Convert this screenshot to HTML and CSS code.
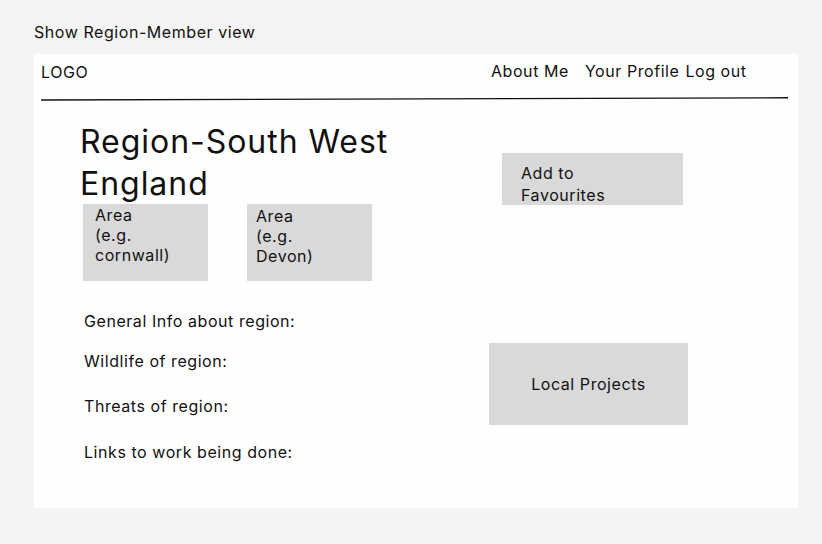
FILE: index.html
```html
<!DOCTYPE html>
<html lang="en">
<head>
<meta charset="utf-8">
<title>Show Region-Member view</title>
<link rel="stylesheet" href="styles.css">
</head>
<body>
<div class="page-label">Show Region-Member view</div>
<div class="panel">
  <header class="header">
    <div class="logo">LOGO</div>
    <nav class="nav">
      <a class="nav-item nav-about">About Me</a>
      <a class="nav-item nav-profile">Your Profile</a>
      <a class="nav-item">Log out</a>
    </nav>
  </header>
  <svg class="rule" width="747" height="4" viewBox="0 0 747 4"><line x1="0" y1="3" x2="747" y2="0.8" stroke="#111" stroke-width="1.4"/></svg>
  <main class="main">
    <section class="left">
      <h1 class="title">Region-South West England</h1>
      <div class="areas">
        <div class="area area-1">Area<br>(e.g.<br>cornwall)</div>
        <div class="area area-2">Area<br>(e.g.<br>Devon)</div>
      </div>
      <ul class="info">
        <li class="info-general">General Info about region:</li>
        <li class="info-wildlife">Wildlife of region:</li>
        <li class="info-threats">Threats of region:</li>
        <li class="info-links">Links to work being done:</li>
      </ul>
    </section>
    <section class="right">
      <div class="fav">Add to<br>Favourites</div>
      <div class="projects">Local Projects</div>
    </section>
  </main>
</div>
</body>
</html>
```

FILE: styles.css
```css
* { box-sizing: border-box; }
html, body { margin: 0; padding: 0; }
body {
  background: #f4f4f4;
  font-family: Inter, "Noto Sans", sans-serif;
  font-size: 16px;
  line-height: 20px;
  letter-spacing: 0.035em;
  color: #111;
  width: 822px;
  height: 544px;
  overflow: hidden;
}
.page-label {
  padding: 22px 0 0 34px;
  height: 54px;
}
.panel {
  margin-left: 34px;
  width: 764px;
  height: 454px;
  background: #fffefe;
}
.header {
  display: flex;
  padding: 8px 0 0 7px;
  height: 43px;
}
.logo { width: 450px; }
.nav { display: flex; margin-top: -1px; }
.nav-item { color: #111; text-decoration: none; }
.nav-about { margin-right: 16px; }
.nav-profile { margin-right: 6px; }
.rule { display: block; margin-left: 7px; }
.main {
  display: grid;
  grid-template-columns: 409px 1fr;
  padding: 19px 0 0 46px;
}
.title {
  margin: 1px 0 0;
  font-size: 32px;
  line-height: 42px;
  font-weight: 400;
  letter-spacing: 0.03em;
}
.areas {
  display: flex;
  gap: 39px;
  margin: -1px 0 0 3px;
}
.area {
  width: 125px;
  height: 77px;
  background: #d9d9d9;
  padding: 1px 0 0 12px;
}
.area-2 { padding: 2px 0 0 9px; }
.info {
  list-style: none;
  margin: 30px 0 0 4px;
  padding: 0;
}
.info-wildlife { margin-top: 20px; }
.info-threats { margin-top: 25px; }
.info-links { margin-top: 26px; }
.right { display: flex; flex-direction: column; align-items: flex-start; }
.fav {
  margin: 33px 0 0 13px;
  width: 181px;
  height: 52px;
  background: #d9d9d9;
  padding: 9px 0 0 19px;
  line-height: 22px;
  overflow: hidden;
}
.projects {
  margin-top: 138px;
  width: 199px;
  height: 82px;
  background: #d9d9d9;
  display: flex;
  align-items: center;
  justify-content: center;
}
```
